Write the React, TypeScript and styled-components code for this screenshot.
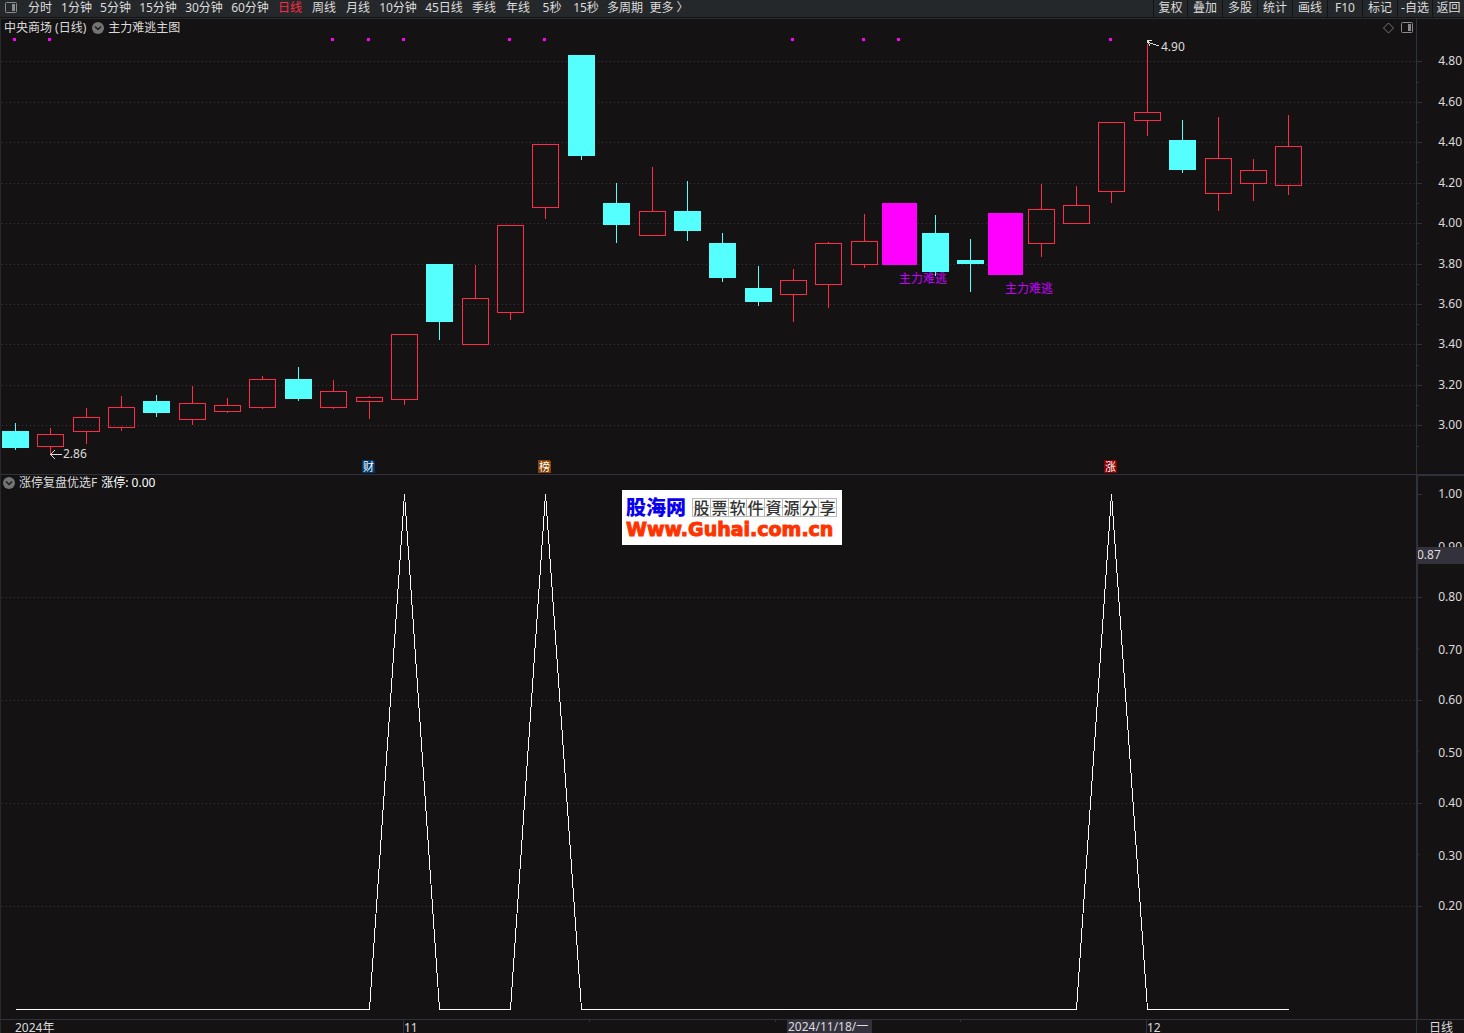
import React from "react";
import styled, { createGlobalStyle } from "styled-components";

const LINE = "#2f323c";
const GRID = "#3a3b40";
const TEXT = "#dcdcdc";
const RED = "#ff2a48";
const CYAN = "#54fffe";
const MAGENTA = "#ff00ff";
const FONT = '"Noto Sans", "Noto Sans CJK SC", sans-serif';

const GlobalStyle = createGlobalStyle`
  * { box-sizing: border-box; }
  body { margin: 0; background: #141213; overflow: hidden; }
  button { font: inherit; color: inherit; background: none; border: 0; padding: 0; cursor: pointer; }
`;

const Page = styled.div`
  display: flex;
  flex-direction: column;
  background: #141213;
  color: ${TEXT};
  font: 12px/16px ${FONT};
`;

const Toolbar = styled.nav`
  display: flex;
  height: 17px;
  background: #25282a;
  white-space: nowrap;
`;

const PanelButton = styled.button`
  display: flex;
  width: 23px;
  padding: 2px 5px;
`;

const Period = styled.button<{ $width: number; $active?: boolean }>`
  flex: 0 0 ${(p) => p.$width}px;
  height: 16px;
  text-align: center;
  && { color: ${(p) => (p.$active ? RED : TEXT)}; }
`;

const Tools = styled.div`
  display: flex;
  margin-left: auto;
`;

const Tool = styled.button`
  width: 35px;
  height: 17px;
  && { border-left: 1px solid #121314; padding-bottom: 1px; }
  &:first-child { width: 34px; }
  &:last-child { width: 32px; }
`;

const Board = styled.main`
  display: grid;
  grid-template-columns: minmax(0, 1fr) 48px;
  margin-top: 1px;
  border-top: 1px solid #2b2e30;
`;

const Pane = styled.section`
  position: relative;
  border-left: 1px solid #28292d;
  border-bottom: 1px solid ${LINE};
`;

const PaneTitle = styled.header`
  position: absolute;
  top: 0;
  left: 0;
  right: 0;
  display: flex;
  align-items: center;
  height: 17px;
  padding: 0 3px;
  gap: 4px;
  white-space: nowrap;
`;

const IndicatorTitle = styled(PaneTitle)`
  height: 15px;
  padding: 0 2px;
`;

const IndicatorValue = styled.output`
  color: #fff;
`;

const PaneActions = styled.div`
  display: flex;
  gap: 6px;
  margin-left: auto;
`;

const IconButton = styled.button`
  display: flex;
`;

const CollapseButton = styled(IconButton)`
  margin-left: 2px;
  ${IndicatorTitle} & { margin-left: 0; }
`;

const Drawing = styled.svg<{ $height: number }>`
  display: block;
  width: 100%;
  height: ${(p) => p.$height}px;
  fill: ${TEXT};
  font: 12px ${FONT};
  shape-rendering: crispEdges;
`;

const Axis = styled.aside<{ $heavy?: boolean }>`
  border-left: ${(p) => (p.$heavy ? 2 : 1)}px solid ${LINE};
  border-top: ${(p) => (p.$heavy ? 1 : 0)}px solid ${LINE};
  border-bottom: 1px solid ${LINE};
`;

const PeriodCell = styled.div`
  height: 14px;
  padding-left: 12px;
  border-left: 1px solid ${LINE};
`;

const DateCell = styled.div`
  height: 14px;
  border-left: 1px solid #28292d;
`;

const Watermark = styled.aside`
  position: absolute;
  top: 15px;
  left: 621px;
  width: 220px;
  height: 55px;
  padding: 5px 4px;
  background: #fff;
  white-space: nowrap;
`;

const WatermarkRow = styled.div`
  display: flex;
  align-items: center;
  gap: 6px;
  height: 24px;
`;

const Brand = styled.strong`
  color: #0a00f0;
  font: 900 20px/24px "Noto Sans CJK SC", sans-serif;
`;

const Slogan = styled.span`
  display: flex;
  border: 1px solid #bbb;
  border-right: 0;
`;

const SloganCell = styled.span`
  width: 18px;
  height: 17px;
  border-right: 1px solid #bbb;
  background: linear-gradient(#ccc, #ccc) 0 8px / 100% 1px no-repeat;
  color: #333;
  font: 500 16px/16px "Noto Sans CJK SC", sans-serif;
  text-align: center;
`;

const Site = styled.a`
  display: block;
  color: #ff3300;
  font: bold 19px/20px "DejaVu Sans", sans-serif;
  text-decoration: none;
  -webkit-text-stroke: 1px #ff3300;
`;

const periods: [string, number][] = [
  ["分时", 34], ["1分钟", 39], ["5分钟", 39], ["15分钟", 46], ["30分钟", 46], ["60分钟", 46],
  ["日线", 34], ["周线", 34], ["月线", 34], ["10分钟", 46], ["45日线", 46], ["季线", 34],
  ["年线", 34], ["5秒", 34], ["15秒", 34], ["多周期", 44],
];

const tools = ["复权", "叠加", "多股", "统计", "画线", "F10", "标记", "-自选", "返回"];

type Kind = "up" | "down" | "escape";

// kind, high, body top, body bottom, low
const candles: [Kind, number, number, number, number][] = [
  ["down", 423, 431, 448, 450], ["up", 428, 434, 447, 455], ["up", 408, 417, 432, 444],
  ["up", 396, 407, 428, 431], ["down", 395, 401, 413, 417], ["up", 386, 403, 420, 425],
  ["up", 398, 405, 412, 413], ["up", 376, 379, 408, 409], ["down", 367, 379, 399, 401],
  ["up", 380, 391, 408, 409], ["up", 396, 397, 402, 419], ["up", 334, 334, 400, 405],
  ["down", 264, 264, 322, 340], ["up", 265, 298, 345, 345], ["up", 225, 225, 313, 320],
  ["up", 144, 144, 208, 219], ["down", 55, 55, 156, 160], ["down", 183, 203, 225, 243],
  ["up", 167, 211, 236, 236], ["down", 181, 211, 231, 241], ["down", 233, 243, 278, 282],
  ["down", 266, 288, 302, 306], ["up", 269, 280, 295, 322], ["up", 242, 243, 285, 308],
  ["up", 214, 241, 265, 268], ["escape", 203, 203, 265, 265], ["down", 215, 233, 272, 276],
  ["down", 239, 260, 264, 292], ["escape", 213, 213, 275, 275], ["up", 184, 209, 244, 257],
  ["up", 186, 205, 224, 224], ["up", 122, 122, 192, 203], ["up", 44, 112, 121, 136],
  ["down", 120, 140, 170, 173], ["up", 117, 158, 194, 211], ["up", 159, 170, 184, 201],
  ["up", 115, 146, 186, 195],
];

const marked = [0, 1, 9, 10, 11, 14, 15, 22, 24, 25, 31];
const limitUps = [11, 15, 31];
const prices = [4.8, 4.6, 4.4, 4.2, 4, 3.8, 3.6, 3.4, 3.2, 3];
const levels = [1, 0.9, 0.8, 0.7, 0.6, 0.5, 0.4, 0.3, 0.2];

const PRICE_TOP = 19;
const center = (i: number) => Math.floor(14.3 + 35.375 * i);
const priceY = (price: number) => Math.round(425.35 - (price - 3) * 202.2) - PRICE_TOP;
const levelY = (level: number) => Math.round(534 - level * 515.5);

function PanelIcon() {
  return (
    <svg width="12" height="12" viewBox="0 0 12 12" aria-hidden="true">
      <rect x="0.5" y="0.5" width="11" height="10" rx="1" fill="none" stroke="#8b8b8b" />
      <rect x="7" y="2" width="3" height="7" fill="#8b8b8b" />
    </svg>
  );
}

function ChevronIcon() {
  return (
    <svg width="12" height="12" viewBox="0 0 12 12" aria-hidden="true">
      <circle cx="6" cy="6" r="6" fill="#747474" />
      <path d="M3 4.5 L6 7.5 L9 4.5" fill="none" stroke="#1c1b1c" strokeWidth="1.5" />
    </svg>
  );
}

function DiamondIcon() {
  return (
    <svg width="12" height="12" viewBox="0 0 12 12" aria-hidden="true">
      <path d="M5.5 1 L10.5 6 L5.5 11 L0.5 6 Z" fill="none" stroke="#777" />
    </svg>
  );
}

function GridLine({ y }: { y: number }) {
  return <line x1="1" x2="100%" y1={y + 0.5} y2={y + 0.5} stroke={GRID} strokeDasharray="1 3" />;
}

function Candle({ index }: { index: number }) {
  const [kind, high, top, bottom, low] = candles[index];
  const x = center(index);
  const y = top - PRICE_TOP;
  const height = bottom - top;
  if (kind === "escape") {
    return <rect x={x - 17} y={y} width="35" height={height} fill={MAGENTA} />;
  }
  const color = kind === "up" ? RED : CYAN;
  return (
    <g fill={color}>
      <rect x={x} y={high - PRICE_TOP} width="1" height={top - high} />
      <rect x={x} y={bottom - PRICE_TOP} width="1" height={low - bottom} />
      {kind === "up" ? (
        <rect x={x - 12.5} y={y + 0.5} width="26" height={height - 1} fill="none" stroke={RED} />
      ) : (
        <rect x={x - 13} y={y} width="27" height={height} />
      )}
    </g>
  );
}

function Flag({ index, label, color }: { index: number; label: string; color: string }) {
  const x = center(index) - 7;
  return (
    <g>
      <path d={`M${x} 441 h11 l2 2 v11 h-13 Z`} fill={color} />
      <text x={x + 1} y="452" fontSize="11" fill="#fff">{label}</text>
    </g>
  );
}

function PriceChart() {
  return (
    <Drawing $height={455} role="img" aria-label="中央商场日线">
      {prices.map((p) => <GridLine key={p} y={priceY(p)} />)}
      {marked.map((i) => <rect key={i} x={center(i) - 2} y="19" width="3" height="3" fill={MAGENTA} />)}
      {candles.map((_, i) => <Candle key={i} index={i} />)}
      <text x="898" y="264" fill="#c800ff">主力难逃</text>
      <text x="1004" y="274" fill="#c800ff">主力难逃</text>
      <path d="M61 435.5 H49 M54 431 L49.5 435.5 L54 440" fill="none" stroke={TEXT} />
      <text x="62" y="439">2.86</text>
      <path d="M1158 27 L1146 23 M1151 21.5 H1146.5 L1149 27" fill="none" stroke={TEXT} />
      <text x="1160" y="32">4.90</text>
      <Flag index={10} label="财" color="#003a70" />
      <Flag index={15} label="榜" color="#8a4300" />
      <Flag index={31} label="涨" color="#8a0000" />
    </Drawing>
  );
}

function LimitChart() {
  const points = candles
    .map((_, i) => `${center(i) + 0.5},${limitUps.includes(i) ? 19 : 534.5}`)
    .join(" ");
  return (
    <Drawing $height={544} role="img" aria-label="涨停复盘优选F">
      {[0.8, 0.6, 0.4, 0.2].map((l) => <GridLine key={l} y={levelY(l)} />)}
      <polyline points={points} fill="none" stroke="#fff" />
    </Drawing>
  );
}

function PriceAxis() {
  return (
    <Drawing $height={455}>
      {prices.map((p) => (
        <g key={p}>
          <rect y={priceY(p)} width="5" height="1" fill={LINE} />
          <rect y={priceY(p - 0.1)} width="2" height="1" fill={LINE} />
          <text x="45" y={priceY(p) + 4} textAnchor="end">{p.toFixed(2)}</text>
        </g>
      ))}
    </Drawing>
  );
}

function LevelAxis() {
  return (
    <Drawing $height={543}>
      {levels.map((l, i) => (
        <g key={l}>
          <rect y={levelY(l) - 1} width={i % 2 ? 1 : 4} height="1" fill={LINE} />
          <text x="44" y={levelY(l) + (i % 2 ? 5 : 3)} textAnchor="end">{l.toFixed(2)}</text>
        </g>
      ))}
      <rect y="71" width="46" height="17" fill="#33313c" />
      <text x="-1" y="83">0.87</text>
    </Drawing>
  );
}

function DateAxis() {
  return (
    <Drawing $height={14}>
      <text x="14" y="12">2024年</text>
      <rect x="402" width="1" height="14" fill={LINE} />
      <text x="403" y="12">11</text>
      {[588, 774, 959].map((x) => <rect key={x} x={x} width="1" height="2" fill={LINE} />)}
      <rect x="786" width="85" height="14" fill="#33313c" />
      <text x="787" y="11">2024/11/18/一</text>
      <rect x="1145" width="1" height="14" fill={LINE} />
      <text x="1146" y="12">12</text>
    </Drawing>
  );
}

export default function App() {
  return (
    <Page>
      <GlobalStyle />
      <Toolbar>
        <PanelButton aria-label="侧栏"><PanelIcon /></PanelButton>
        {periods.map(([label, width]) => (
          <Period key={label} $width={width} $active={label === "日线"}>{label}</Period>
        ))}
        <Period $width={44}>更多 〉</Period>
        <Tools>
          {tools.map((label) => <Tool key={label}>{label}</Tool>)}
        </Tools>
      </Toolbar>
      <Board>
        <Pane>
          <PriceChart />
          <PaneTitle>
            <span>中央商场 (日线)</span>
            <CollapseButton aria-label="主图指标"><ChevronIcon /></CollapseButton>
            <span>主力难逃主图</span>
            <PaneActions>
              <IconButton aria-label="标记"><DiamondIcon /></IconButton>
              <IconButton aria-label="面板"><PanelIcon /></IconButton>
            </PaneActions>
          </PaneTitle>
        </Pane>
        <Axis><PriceAxis /></Axis>
        <Pane>
          <LimitChart />
          <IndicatorTitle>
            <CollapseButton aria-label="副图指标"><ChevronIcon /></CollapseButton>
            <span>涨停复盘优选F</span>
            <IndicatorValue>涨停: 0.00</IndicatorValue>
          </IndicatorTitle>
          <Watermark>
            <WatermarkRow>
              <Brand>股海网</Brand>
              <Slogan>
                {[..."股票软件資源分享"].map((c) => <SloganCell key={c}>{c}</SloganCell>)}
              </Slogan>
            </WatermarkRow>
            <Site href="#">Www.Guhai.com.cn</Site>
          </Watermark>
        </Pane>
        <Axis $heavy><LevelAxis /></Axis>
        <DateCell><DateAxis /></DateCell>
        <PeriodCell>日线</PeriodCell>
      </Board>
    </Page>
  );
}
